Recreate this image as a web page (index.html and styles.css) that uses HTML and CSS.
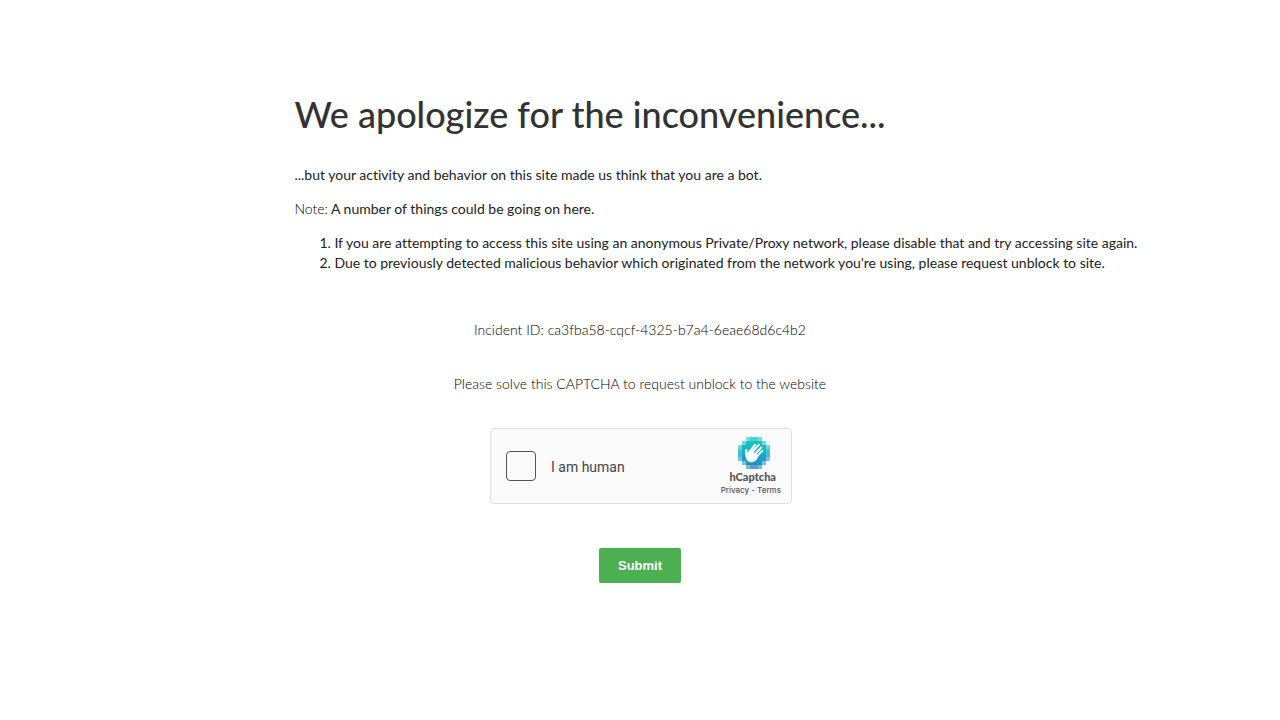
FILE: index.html
```html
<!DOCTYPE html>
<html lang="en">
<head>
    <meta charset="UTF-8">
    <meta name="viewport" content="width=device-width, initial-scale=1.0">
    <title>We apologize for the inconvenience...</title>
    <link rel="stylesheet" href="styles.css">
</head>
<body>
    <div class="container">
        <div class="message">
            <h1>We apologize for the inconvenience...</h1>
            <p>...but your activity and behavior on this site made us think that you are a bot.</p>
            <p><span class="light">Note:</span> A number of things could be going on here.</p>
            <ol>
                <li>If you are attempting to access this site using an anonymous Private/Proxy network, please disable that and try accessing site again.</li>
                <li>Due to previously detected malicious behavior which originated from the network you're using, please request unblock to site.</li>
            </ol>
        </div>
        <form class="unblock">
            <p class="light">Incident ID: ca3fba58-cqcf-4325-b7a4-6eae68d6c4b2</p>
            <p class="light">Please solve this CAPTCHA to request unblock to the website</p>
            <div class="captcha">
                <input type="checkbox" id="human">
                <label for="human">I am human</label>
                <div class="brand">
                    <svg class="logo" viewBox="0 0 32 32" width="32" height="32" shape-rendering="crispEdges" aria-hidden="true">
                        <defs>
                            <linearGradient id="sea" x1="0" y1="0" x2="0" y2="1">
                                <stop offset="0" stop-color="#1dccb8"/>
                                <stop offset="0.5" stop-color="#12b0c8"/>
                                <stop offset="1" stop-color="#2586c4"/>
                            </linearGradient>
                        </defs>
                        <path fill="url(#sea)" d="M8 0h16v4h4v4h4v16h-4v4h-4v4H8v-4H4v-4H0V8h4V4h4z"/>
                        <!-- paler outer blocks -->
                        <path fill="#fff" fill-opacity="0.4" d="M8 0h4v4H8zM20 0h4v4h-4zM4 4h4v4H4zM24 4h4v4h-4zM0 8h4v4H0zM28 8h4v4h-4zM0 20h4v4H0zM28 20h4v4h-4zM4 24h4v4H4zM24 24h4v4h-4zM8 28h4v4H8zM20 28h4v4h-4z"/>
                        <path fill="#fff" fill-opacity="0.2" d="M12 0h8v4h-8zM0 12h4v8H0zM28 12h4v8h-4zM12 28h8v4h-8z"/>
                        <g shape-rendering="auto" fill="none" stroke="#fff" stroke-linecap="round">
                            <path stroke-width="2" d="M10.500 16L17 8M12.500 17L20.700 7.800M15 19L23.400 10.500M17 21L24.300 14"/>
                            <path stroke-width="2" d="M9 20.500C7.800 17.500 7.500 15 8.500 13"/>
                            <path fill="#fff" stroke="none" d="M9 15.500L15.500 15L20.500 18.800C19.500 22 17.500 25 14 25.300C10.500 25.700 7.500 22.500 7.800 19z"/>
                        </g>
                    </svg>
                    <span class="name">hCaptcha</span>
                    <span class="links"><a href="#">Privacy</a> - <a href="#">Terms</a></span>
                </div>
            </div>
            <button type="submit">Submit</button>
        </form>
    </div>
</body>
</html>
```

FILE: styles.css
```css
* {
    box-sizing: border-box;
}
body {
    margin: 0;
    background-color: #fff;
    color: #222;
    font-family: Lato, "Liberation Sans", sans-serif;
    font-size: 14px;
    line-height: 20px;
    font-variant-ligatures: none;
}
.container {
    padding: 94px 0 40px;
}
.message {
    margin-left: 23%;
}
h1 {
    margin: 0 0 31px;
    color: #333;
    font-size: 36px;
    font-weight: 500;
    line-height: 40px;
}
p {
    margin: 0 0 14px;
}
ol {
    margin: 0;
    padding-left: 40px;
}
.light {
    color: #000;
    font-weight: 300;
}

/* captcha form */
.unblock {
    display: flex;
    flex-direction: column;
    align-items: center;
    margin-top: 47px;
}
.unblock p {
    margin-bottom: 34px;
}
.captcha {
    width: 302px;
    height: 76px;
    display: flex;
    align-items: center;
    margin-left: 2px;
    padding: 0 10px 0 15px;
    background-color: #fafafa;
    border: 1px solid #e0e0e0;
    border-radius: 4px;
}
.captcha input {
    appearance: none;
    width: 30px;
    height: 30px;
    margin: 0 15px 0 0;
    background-color: #fafafa;
    border: 1px solid #555;
    border-radius: 4px;
    cursor: pointer;
}
.captcha label {
    padding-top: 2px;
    font-family: Roboto, sans-serif;
    font-size: 14px;
    color: #444;
}
.brand {
    display: flex;
    flex-direction: column;
    align-items: flex-end;
    margin-left: auto;
    color: #555;
}
.brand .logo {
    margin-right: 11px;
}
.brand .name {
    margin-right: 5px;
    font-size: 11px;
    font-weight: 900;
    line-height: 16px;
}
.brand .links {
    font-family: Inter, sans-serif;
    font-size: 8px;
    font-weight: 500;
    line-height: 10px;
}
.links a {
    color: #555;
    text-decoration: none;
}
button {
    margin-top: 44px;
    padding: 10px 19px;
    background-color: #4caf50;
    border: none;
    border-radius: 2px;
    color: #fff;
    font-family: "Liberation Sans", Arial, sans-serif;
    font-size: 13px;
    font-weight: bold;
    line-height: 15px;
    cursor: pointer;
}
```
